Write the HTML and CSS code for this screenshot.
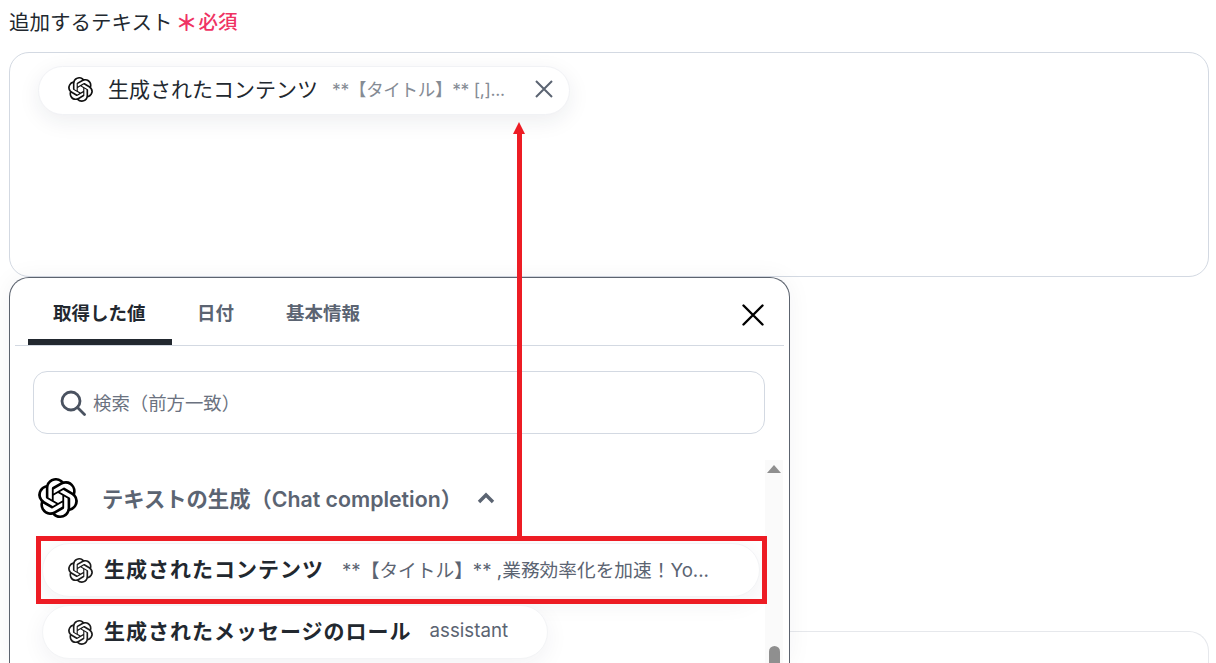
FILE: index.html
```html
<!DOCTYPE html>
<html lang="ja">
<head>
    <meta charset="UTF-8">
    <title>追加するテキスト</title>
    <link rel="stylesheet" href="styles.css">
</head>
<body>
    <svg class="defs" width="0" height="0">
        <symbol id="gptLogo" viewBox="0 0 24 24">
            <path d="M22.2819 9.8211a5.9847 5.9847 0 0 0-.5157-4.9108 6.0462 6.0462 0 0 0-6.5098-2.9A6.0651 6.0651 0 0 0 4.9807 4.1818a5.9847 5.9847 0 0 0-3.9977 2.9 6.0462 6.0462 0 0 0 .7427 7.0966 5.98 5.98 0 0 0 .511 4.9107 6.051 6.051 0 0 0 6.5146 2.9001A5.9847 5.9847 0 0 0 13.2599 24a6.0557 6.0557 0 0 0 5.7718-4.2058 5.9894 5.9894 0 0 0 3.9977-2.9001 6.0557 6.0557 0 0 0-.7475-7.0729zm-9.022 12.6081a4.4755 4.4755 0 0 1-2.8764-1.0408l.1419-.0804 4.7783-2.7582a.7948.7948 0 0 0 .3927-.6813v-6.7369l2.02 1.1686a.071.071 0 0 1 .038.052v5.5826a4.504 4.504 0 0 1-4.4945 4.4944zm-9.6607-4.1254a4.4708 4.4708 0 0 1-.5346-3.0137l.142.0852 4.783 2.7582a.7712.7712 0 0 0 .7806 0l5.8428-3.3685v2.3324a.0804.0804 0 0 1-.0332.0615L9.74 19.9502a4.4992 4.4992 0 0 1-6.1408-1.6464zM2.3408 7.8956a4.485 4.485 0 0 1 2.3655-1.9728V11.6a.7664.7664 0 0 0 .3879.6765l5.8144 3.3543-2.0201 1.1685a.0757.0757 0 0 1-.071 0l-4.8303-2.7865A4.504 4.504 0 0 1 2.3408 7.872zm16.5963 3.8558L13.1038 8.364 15.1192 7.2a.0757.0757 0 0 1 .071 0l4.8303 2.7913a4.4944 4.4944 0 0 1-.6765 8.1042v-5.6772a.79.79 0 0 0-.407-.667zm2.0107-3.0231l-.142-.0852-4.7735-2.7818a.7759.7759 0 0 0-.7854 0L9.409 9.2297V6.8974a.0662.0662 0 0 1 .0284-.0615l4.8303-2.7866a4.4992 4.4992 0 0 1 6.6802 4.66zM8.3065 12.863l-2.02-1.1638a.0804.0804 0 0 1-.038-.0567V6.0742a4.4992 4.4992 0 0 1 7.3757-3.4537l-.142.0805L8.704 5.459a.7948.7948 0 0 0-.3927.6813zm1.0976-2.3654l2.602-1.4998 2.6069 1.4998v2.9994l-2.5974 1.4997-2.6067-1.4997Z"/>
        </symbol>
    </svg>

    <div class="field-label">
        <span class="label-text">追加するテキスト</span>
        <span class="required"><span class="asterisk">＊</span>必須</span>
    </div>

    <div class="text-box">
        <div class="value-chip">
            <svg class="chip-logo"><use href="#gptLogo"/></svg>
            <span class="chip-name">生成されたコンテンツ</span>
            <span class="chip-value">**【タイトル】** [,]...</span>
            <svg class="chip-close" viewBox="0 0 20 20"><path d="M2 2 18 18M18 2 2 18"/></svg>
        </div>
    </div>

    <div class="lower-box"></div>

    <div class="picker">
        <div class="tabs">
            <div class="tab tab-active">取得した値</div>
            <div class="tab">日付</div>
            <div class="tab">基本情報</div>
            <svg class="picker-close" viewBox="0 0 22 22"><path d="M1.5 1.5 20.5 20.5M20.5 1.5 1.5 20.5"/></svg>
        </div>
        <div class="search">
            <svg class="search-icon" viewBox="0 0 26 26"><circle cx="11" cy="11" r="9"/><path d="M17.5 17.5 24.5 24.5"/></svg>
            <span class="search-text">検索（前方一致）</span>
        </div>
        <div class="list-area">
            <div class="group-head">
                <svg class="group-logo"><use href="#gptLogo"/></svg>
                <span class="group-name">テキストの生成（Chat completion）</span>
                <svg class="chevron" viewBox="0 0 18 12"><path d="M2 10 9 3 16 10"/></svg>
            </div>
            <div class="row row-first">
                <svg class="row-logo"><use href="#gptLogo"/></svg>
                <span class="row-name">生成されたコンテンツ</span>
                <span class="row-value">**【タイトル】** ,業務効率化を加速！Yo...</span>
            </div>
            <div class="row row-second">
                <svg class="row-logo"><use href="#gptLogo"/></svg>
                <span class="row-name">生成されたメッセージのロール</span>
                <span class="row-value">assistant</span>
            </div>
            <div class="scroll-bar">
                <div class="scroll-up"></div>
                <div class="scroll-thumb"></div>
            </div>
        </div>
    </div>

    <!-- annotation drawn over the screenshot -->
    <div class="mark-rect"></div>
    <div class="mark-line"></div>
    <div class="mark-head"></div>
</body>
</html>
```

FILE: styles.css
```css
* {
    box-sizing: border-box;
}
html, body {
    height: 663px;
    overflow: hidden;
}
body {
    margin: 0;
    padding: 0 7px 0 9px;
    position: relative;
    background: #fff;
    color: #22282f;
    font-family: Inter, "Noto Sans CJK JP", sans-serif;
}
.defs {
    position: absolute;
}
.field-label {
    display: flex;
    align-items: center;
    height: 52px;
    padding-bottom: 11px;
}
.label-text {
    font-size: 20.5px;
}
.required {
    display: flex;
    align-items: center;
    margin-left: 3px;
    font-size: 19.5px;
    font-weight: 500;
    color: #ef3363;
}
.asterisk {
    width: 23px;
    font-size: 22px;
    line-height: 18px;
    padding-top: 4px;
    font-weight: 700;
}
.text-box {
    height: 225px;
    padding: 13px 28px;
    border: 1px solid #d3d9e2;
    border-radius: 20px;
}
.value-chip {
    display: flex;
    align-items: center;
    width: 532px;
    height: 49px;
    padding: 0 15px 0 29px;
    background: #fff;
    border: 1px solid #f1f2f5;
    border-radius: 25px;
    box-shadow: 0 6px 22px rgba(30, 40, 60, 0.08);
}
.chip-logo {
    width: 25px;
    height: 25px;
    margin-bottom: 2px;
    flex: none;
    fill: #111;
}
.chip-name {
    margin-left: 15px;
    padding-bottom: 5px;
    font-size: 21px;
    white-space: nowrap;
}
.chip-value {
    margin-left: 14px;
    padding-bottom: 4px;
    font-size: 17.5px;
    letter-spacing: -0.3px;
    color: #858b94;
    white-space: nowrap;
}
.chip-close {
    width: 20px;
    height: 20px;
    margin-left: auto;
    margin-bottom: 3px;
    flex: none;
    fill: none;
    stroke: #5b6472;
    stroke-width: 2;
}
.lower-box {
    height: 32px;
    margin-top: 354px;
    border: 1px solid #e6e8ec;
    border-bottom: none;
    border-radius: 20px 20px 0 0;
}
.picker {
    position: absolute;
    left: 9px;
    top: 277px;
    width: 781px;
    height: 386px;
    padding: 0 5px;
    background: #fff;
    border: 1px solid #5c636e;
    border-bottom: none;
    border-radius: 20px 20px 0 0;
    box-shadow: 0 0 24px rgba(30, 40, 60, 0.05);
}
.tabs {
    display: flex;
    height: 68px;
    padding-left: 13px;
    border-bottom: 1px solid #d3d9e2;
    position: relative;
}
.tab {
    height: 67px;
    padding: 21px 26px 0;
    font-size: 18.5px;
    font-weight: 700;
    color: #5b6472;
    white-space: nowrap;
}
.tab-active {
    width: 144px;
    padding-left: 25px;
    color: #22282f;
    border-bottom: 6px solid #22282f;
    border-radius: 7px 7px 0 0;
}
.tab-active + .tab {
    padding-left: 25px;
}
.picker-close {
    position: absolute;
    right: 20px;
    top: 26px;
    width: 22px;
    height: 22px;
    fill: none;
    stroke: #000;
    stroke-width: 2.4;
    stroke-linecap: round;
}
.search {
    display: flex;
    align-items: center;
    height: 63px;
    margin: 25px 19px 0 18px;
    padding-left: 26px;
    border: 1px solid #d3d9e2;
    border-radius: 14px;
    font-size: 18.4px;
    color: #6b7280;
}
.search-icon {
    width: 26px;
    height: 26px;
    margin-right: 7px;
    fill: none;
    stroke: #4a5260;
    stroke-width: 2.8;
    stroke-linecap: round;
}
.search-text {
    padding-bottom: 2px;
}
.list-area {
    position: relative;
    height: 229px;
    overflow: hidden;
}
.group-head {
    display: flex;
    align-items: center;
    height: 109px;
    padding: 19px 0 0 23px;
}
.group-logo {
    width: 40px;
    height: 40px;
    flex: none;
    fill: #000;
}
.group-name {
    margin-left: 24px;
    padding-bottom: 2px;
    font-size: 21.3px;
    font-weight: 600;
    color: #5b6472;
    white-space: nowrap;
}
.chevron {
    width: 18px;
    height: 12px;
    margin-left: 15px;
    fill: none;
    stroke: #5b6472;
    stroke-width: 3.4;
}
.row {
    display: flex;
    align-items: center;
    height: 54px;
    margin-left: 27px;
    padding-left: 25px;
    background: #fff;
    border-radius: 27px;
    border: 1px solid #f3f4f6;
    box-shadow: 0 6px 24px rgba(30, 40, 60, 0.06);
}
.row-first {
    width: 718px;
}
.row-second {
    width: 506px;
    margin-top: 8px;
}
.row-logo {
    width: 25px;
    height: 25px;
    flex: none;
    fill: #1c1c1c;
}
.row-name {
    margin-left: 11px;
    padding-bottom: 4px;
    font-size: 21px;
    font-weight: 700;
    letter-spacing: 1px;
    white-space: nowrap;
}
.row-value {
    margin-left: 18px;
    padding-bottom: 3px;
    font-size: 18.7px;
    color: #5b6472;
    white-space: nowrap;
}
.scroll-bar {
    position: absolute;
    left: 750px;
    top: 26px;
    bottom: 0;
    width: 18px;
    background: #fafafa;
}
.scroll-up {
    width: 0;
    margin: 5px auto 0;
    border-left: 7px solid transparent;
    border-right: 7px solid transparent;
    border-bottom: 8px solid #8f8f8f;
}
.scroll-thumb {
    width: 11px;
    height: 60px;
    margin: 173px auto 0;
    background: #8f8f8f;
    border-radius: 6px;
}
.mark-rect {
    position: absolute;
    left: 36px;
    top: 536px;
    width: 731px;
    height: 68px;
    border: 5px solid #ed1c24;
}
.mark-line {
    position: absolute;
    left: 517px;
    top: 130px;
    width: 5px;
    height: 407px;
    background: #ed1c24;
}
.mark-head {
    position: absolute;
    left: 513px;
    top: 122px;
    width: 0;
    border-left: 6.5px solid transparent;
    border-right: 6.5px solid transparent;
    border-bottom: 12px solid #ed1c24;
}
```
